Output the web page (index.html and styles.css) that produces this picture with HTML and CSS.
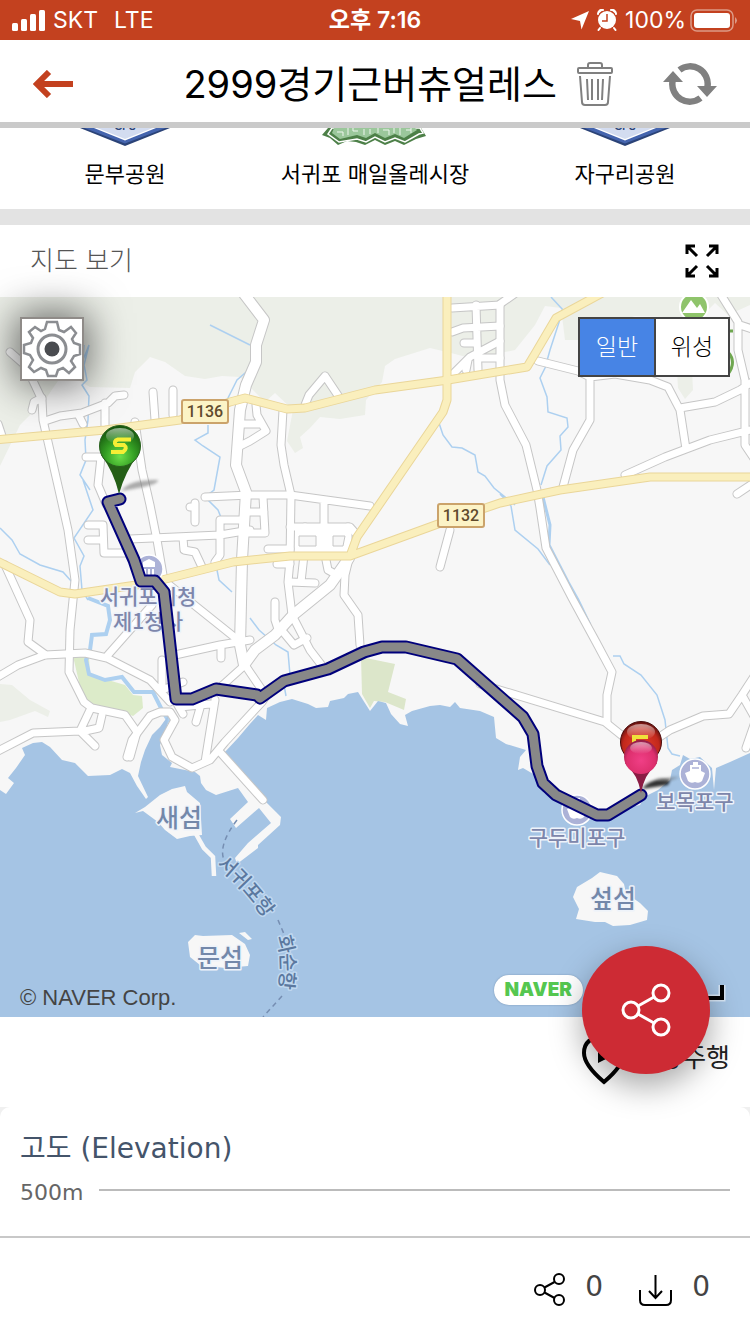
FILE: index.html
```html
<!DOCTYPE html>
<html lang="ko">
<head>
<meta charset="utf-8">
<meta name="viewport" content="width=device-width">
<title>2999경기근버츄얼레스</title>
<link rel="stylesheet" href="styles.css">
</head>
<body>
<div class="status">
  <div class="status-left">
    <svg width="33" height="21" viewBox="0 0 33 21" fill="#fff"><rect y="13" width="6" height="8" rx="1.5"/><rect x="9" y="9" width="6" height="12" rx="1.5"/><rect x="18" y="4" width="6" height="17" rx="1.5"/><rect x="27" width="6" height="21" rx="1.5"/></svg>
    <span>SKT</span><span class="net">LTE</span>
  </div>
  <div class="clock">오후 7:16</div>
  <div class="status-right">
    <svg width="18" height="19" viewBox="0 0 18 19"><path d="M18 0 10.500 18.500 9 10 0 8Z" fill="#fff"/></svg>
    <svg width="20" height="22" viewBox="0 0 20 22"><g fill="#fff"><circle cx="10" cy="11" r="9"/><path d="M1 5a4 4 0 0 1 5-4M19 5a4 4 0 0 0-5-4M3 19l-1.500 2M17 19l1.500 2" stroke="#fff" stroke-width="2" stroke-linecap="round"/></g><path d="M10 5v7H5" fill="none" stroke="#c3411f" stroke-width="1.500"/></svg>
    <span>100%</span>
    <svg width="48" height="23" viewBox="0 0 48 23"><rect x="1" y="1" width="42" height="21" rx="6" fill="none" stroke="#dd9a86" stroke-width="1.500"/><rect x="4" y="4" width="36" height="15" rx="3" fill="#fff"/><path d="M45 8q4 3.500 0 7z" fill="#dd9a86"/></svg>
  </div>
</div>
<header class="titlebar">
  <button class="icon-btn" aria-label="뒤로"><svg width="41" height="28" viewBox="0 0 41 28"><path d="M41 14H6M17 2 5 14l12 12" fill="none" stroke="#c3411f" stroke-width="6"/></svg></button>
  <h1>2999경기근버츄얼레스</h1>
  <button class="icon-btn trash" aria-label="삭제"><svg width="36" height="44" viewBox="0 0 36 44" fill="none" stroke="#808080" stroke-width="2"><path d="M11 5V3q0-2 2-2h10q2 0 2 2v2" /><rect x="1" y="6" width="34" height="5" rx="1"/><path d="M3 14l2 26q0 3 3 3h20q3 0 3-3l2-26M10 17l1 21M15 17v21M21 17v21M26 17l-1 21"/></svg></button>
  <button class="icon-btn" aria-label="새로고침"><svg width="54" height="42" viewBox="0 0 54 42"><path d="M16.500 7a17.500 17.500 0 0 1 28 16.500M37.500 35a17.500 17.500 0 0 1-28-16.500" fill="none" stroke="#808080" stroke-width="6.500"/><path d="M34 23h20L44 34zM0 19h20L10 8z" fill="#808080"/></svg></button>
</header>

<ul class="courses">
  <li>
    <svg width="100" height="18" viewBox="0 0 100 18"><path d="M0-2 50 18 100-2z" fill="#2b4377"/><path d="M4-2 50 15.500 96-2z" fill="#4464ae"/><path d="M14-2 50 12.500 86-2z" fill="#fff"/><path d="M17-2 50 11 83-2z" fill="#d3dcf0"/><text x="50" y="2" class="gps">GPS</text></svg>
    <span>문부공원</span>
  </li>
  <li>
    <svg width="106" height="18" viewBox="0 0 106 18"><path d="M6 0 0 7l8 3 8 7 9-4 9 1 9 3 10-5 10 5 10-4 9 4 12-6 10-3-5-8z" fill="#4d8048"/><path d="M10 0 6 6l11 8 18-3 9 3 9-5 10 5 10-4 10 4 14-8 4-1-3-5z" fill="none" stroke="#fff" stroke-width="1.500"/><path d="M12 0 10 5l8 6 17-4 9 3 9-5 10 5 10-4 9 4 13-8-2-2z" fill="#9bc79b"/><path d="M15 4h6v4M26 0v7M31 0v3h5M42 1v6M48 1v5M56 0v5M61 2h6v5M72 0v5M78 0v7M84 2h5M89 0v5" fill="none" stroke="#eef6ee" stroke-width="1"/></svg>
    <span>서귀포 매일올레시장</span>
  </li>
  <li>
    <svg width="100" height="18" viewBox="0 0 100 18"><path d="M0-2 50 18 100-2z" fill="#2b4377"/><path d="M4-2 50 15.500 96-2z" fill="#4464ae"/><path d="M14-2 50 12.500 86-2z" fill="#fff"/><path d="M17-2 50 11 83-2z" fill="#d3dcf0"/><text x="50" y="2" class="gps">GPS</text></svg>
    <span>자구리공원</span>
  </li>
</ul>

<section class="map-section">
  <div class="section-head">
    <h2>지도 보기</h2>
    <button class="icon-btn" aria-label="전체 화면"><svg width="34" height="34" viewBox="0 0 34 34" fill="none" stroke="#000" stroke-width="3"><path d="M2 10V2h8M2 2l10 10M24 2h8v8M32 2 22 12M2 24v8h8M2 32l10-10M24 32h8v-8M32 32 22 22"/></svg></button>
  </div>
  <div class="map">
    <svg class="map-canvas" viewBox="0 297 750 720" role="img" aria-label="지도">
      <defs>
        <radialGradient id="green" cx=".5" cy=".75" r=".7"><stop offset="0" stop-color="#6de04a"/><stop offset=".5" stop-color="#35a024"/><stop offset="1" stop-color="#17590f"/></radialGradient>
        <radialGradient id="red" cx=".5" cy=".6" r=".62"><stop offset="0" stop-color="#e8402c"/><stop offset=".7" stop-color="#c2281c"/><stop offset="1" stop-color="#4c0b0b"/></radialGradient>
        <radialGradient id="pink" cx=".5" cy=".6" r=".6"><stop offset="0" stop-color="#f03f86"/><stop offset=".7" stop-color="#dd2f6d"/><stop offset="1" stop-color="#8b1c44"/></radialGradient>
        <linearGradient id="gloss" x2="0" y2="1"><stop offset="0" stop-color="#fff" stop-opacity=".55"/><stop offset="1" stop-color="#fff" stop-opacity="0"/></linearGradient>
        <filter id="soft" x="-50%" y="-100%" width="200%" height="300%"><feGaussianBlur stdDeviation="1.800"/></filter>
        <path id="ferry-a" d="M222 859 Q250 881 281 926"/>
        <path id="ferry-b" d="M285 935 Q294 962 286 998"/>
        <g id="roads">
          <path d="M10 352 26 366 34 383 42 400 43 420 59 490 68 530 75 580 70 630 69 672 84 702 92 708 125 715 137 732 130 757"/>
          <path d="M45 421 60 416 82 413 108 403 115 396 124 395M32 410 34 402 42 398M78 414 83 424M105 403V430M86 457H101L98 485 106 504"/>
          <path d="M135 422 142 470 150 505 157 540 163 575M153 392 155 420M173 390V415M-2 424 2 436"/>
          <path d="M256 405 257 415 266 431 250 441 240 446M240 424H262M283 410 281 445 284 465 291 495 290 560 288 582 292 615 310 650 323 667"/>
          <path d="M305 405 309 395 325 376 339 397M452 308 500 305M476 305 478 370M452 332 463 328 500 326M464 343H476M452 375 470 357 500 341M466 370 468 360M478 358H500"/>
          <path d="M520 290 500 304V380L505 405 526 445 537 490 540 508 546 548 572 598 596 642 612 672 607 695V722"/>
          <path d="M538 361 578 371 590 377 615 374 650 380 668 387 680 410 686 449M590 377V420L573 450 563 487M680 408 715 402 740 390 755 380M625 475 665 457 710 440 755 429M718 290 738 322V350L745 380V445L755 460M740 325 755 330M737 494 755 482"/>
          <path d="M480 684 605 722 640 750 670 730 703 716 729 714 742 695 755 675M742 695 755 718M746 748 755 722"/>
          <path d="M205 497 250 495H290L370 506M324 500V555M290 527H350L357 535M268 549H290M277 564H290M304 555 301 582M290 582 315 583M263 497 265 533H246M246 512H264M350 555 345 575 344 595 358 615 360 645"/>
          <path d="M325 555 328 570 337 575M275 602V620L279 632M284 633 294 645 307 638M440 567 450 530M305 527V555M348 527V555"/>
          <path d="M130 539 220 535 250 530M88 525H103L104 553H128M88 540H103M195 503V522M190 507H195M240 520H220V555L215 562M183 538 184 550 195 552 202 567"/>
          <path d="M5 565 30 620 28 642 46 655M-4 678 18 665 45 655 85 653 107 658 150 680 170 702M107 656 152 605M168 584 238 640M175 655 220 645 250 640M221 645V658M162 660V690L183 682"/>
          <path d="M-4 752 33 733 80 731 90 710M80 731 95 746M102 715 99 728 85 731M127 757 132 740 150 716 160 712H170L175 720 164 740 172 757 192 768 210 760 225 742 262 702 270 690M205 762 215 700M219 751 263 800M180 707 210 704M200 708 196 722M175 700 183 714M215 692 245 665 262 690"/>
        </g>
        <g id="wide-roads">
          <path d="M238 286 264 320 256 345V362L246 385 240 410 236 465 246 492 242 560 240 645 244 665"/>
          <path d="M349 558 330 585 293 615 275 635 255 650 244 665"/>
        </g>
        <g id="highways">
          <path d="M-5 440 105 430 180 420 230 402 245 398 287 409 305 408 375 390 448 380 527 367 536 352 556 318 606 291"/>
          <path d="M447 290V400L443 412 357 537 350 556M-5 560 60 592 75 594 150 583 233 562 290 556H350L438 524 500 503 560 490 650 477H755"/>
        </g>
      </defs>
      <path d="M0 297H750V1017H0z" fill="#f7f7f7"/>
      <path d="M0 297H500V356L470 358 455 354 430 348 395 359 385 366 382 382 366 400 365 415 340 419 320 417 310 428 300 437 303 448 295 453 287 441 293 410 275 393 265 402 240 377 222 376 205 379 185 376 165 362 150 357 135 372 130 388 90 387 64 372 45 400 20 425 0 466Z" fill="#ecefe8"/>
      <path d="M500 297H750V305L728 315 715 303 700 318 635 316 605 325 600 340 565 340 561 308 545 306 535 325 515 350 500 353ZM677 370 692 370 693 390 685 399 678 388ZM0 684 12 685 30 700 50 711 48 717 35 711 10 720 0 722Z" fill="#ecefe8"/>
      <path d="M73 656 89 657 90 676 108 680 125 685 133 695 142 696 143 708 133 716 119 711 91 708 83 700Z" fill="#dcebc9"/>
      <path d="M361 657 395 664 388 692 406 699 404 710 385 702 374 701 370 708 362 694Z" fill="#dce6ca"/>
      <g class="water">
        <path d="M210 325 250 345M252 367 237 380 227 400M208 425 208 433 195 440 203 446 220 457 214 490 205 497 218 510 224 525M217 570 219 580 232 592M0 528 12 540 20 554 40 565 63 572 72 582M83 480 93 510 74 538 84 556 80 566 82 590 88 600M84 345 83 360 89 345 84 365 87 380 82 385 89 396 88 420 85 440 86 460 80 475 90 490M439 423 443 435 452 447 462 448 475 455 478 472 485 476 494 488 515 505M551 297 563 310 550 350 545 368 540 378 547 397 548 412 567 418 568 427 560 436 561 450 547 466 541 485M500 494 511 506 515 530 538 549 550 565M613 656H620L624 664 641 675 657 695 665 720 668 748 672 754 680 756M250 618 259 630 276 645 288 652 290 675 284 685 286 696"/>
        <path d="M543 497 550 525 549 545 568 582 578 600 590 625" stroke-width="3"/>
        <path d="M88 598 108 606 110 620 106 634 92 635 90 650 86 660 89 674 105 680 122 677 134 692 153 692 162 710 168 720 158 735" stroke-width="4"/>
      </g>
      <path d="M0 790 6 794 14 783 8 778 16 768 25 755 22 748 33 743 42 742 50 747 62 760 75 763 88 776 110 775 122 769 130 773 137 786 146 799 148 797 138 776 141 762 145 750 152 735 160 727 168 716 167 728 160 745 162 755 172 763 170 767 195 772 200 776 201 783 206 790 216 795 238 788 248 802 230 819 236 828 259 808 271 823 248 843 235 858 237 864 258 848 258 845 280 825 281 817 266 802 224 753 238 738 249 725 258 715 266 720 267 708 280 702 292 699 308 704 316 708 328 707 330 701 344 698 348 694 358 692 363 700 370 711 378 701 386 703 391 714 400 724 408 726 405 715 412 711 430 706 440 705 450 707 455 702 460 708 480 711 494 717 496 738 506 744 526 750 520 757 518 770 523 768 535 775 544 793 560 803 600 820 625 808 640 805 644 797 658 790 670 780 672 770 680 765 683 755 690 759 700 757 712 768 714 790 716 768 730 762 750 753V1017H0Z" fill="#a5c4e4"/>
      <g fill="#f7f7f7">
        <path d="M135 813 145 807 160 795 172 789 185 786 187 792 200 803 202 835 190 836 177 839 165 830 158 822 143 811ZM188 942 195 935 203 936 232 935 245 944 250 955 248 966 225 968 200 965 190 957ZM239 933 245 932 252 939 248 940ZM573 897 577 887 592 878 600 872 617 876 624 884 626 893 640 903 648 911 647 920 630 925 613 926 605 922 595 922 576 919 579 909Z"/>
        <path d="M196 834 204 848 213 857 214 876" fill="none" stroke="#f7f7f7" stroke-width="4.500"/>
      </g>
      <use href="#roads" class="road-edge"/><use href="#wide-roads" class="road-edge wide"/>
      <use href="#roads" class="road"/><use href="#wide-roads" class="road wide"/>
      <path d="M295 530H350L345 556H295z" fill="#fff"/>
      <path d="M299 536H316V546H299zM333 536H345L343 546H333z" fill="#f7f7f7" stroke="#c6c6c6"/>
      <use href="#highways" class="highway-edge"/><use href="#highways" class="highway"/>

      <g class="shield"><rect x="182" y="400" width="46" height="23" rx="2"/><text x="205" y="417">1136</text><rect x="438" y="504" width="46" height="23" rx="2"/><text x="461" y="521">1132</text></g>

      <g><circle cx="694" cy="307" r="14" fill="#8fc46b" stroke="#fff" stroke-width="2"/><path d="M682 313 691 300 697 308 700 304 705 313z" fill="#fff"/><path d="M728 331H733M728 352Q737 362 728 374" fill="none" stroke="#6fa750" stroke-width="3"/></g>

      <g fill="#acb2d7" stroke="#fff" stroke-width="1.500"><circle cx="149" cy="569" r="14"/><circle cx="577" cy="810" r="15"/><circle cx="695" cy="774" r="15"/></g>
      <path d="M143 567V562L149 559 155 562V567zM144 569H146V578H144zM148 569H150V578H148zM152 569H154V578H152z" fill="#fff"/>
      <g id="ship"><path d="M693 765V762H698V765H701V771L705 773 702 781Q699 784 695 782 691 784 688 781L685 773 690 771V765z" fill="#fff"/><path d="M692 768H699" stroke="#acb2d7" stroke-width="1.500"/></g>
      <use href="#ship" x="-118" y="36"/>

      <path d="M237 820Q218 845 224 860M278 920 284 934M282 996 263 1017" fill="none" stroke="#768eb2" stroke-width="1.500" stroke-dasharray="5 4"/>
      <g class="place">
        <text x="148" y="604">서귀포시청</text><text x="148" y="629">제1청사</text>
        <text x="577" y="845">구두미포구</text><text x="695" y="809">보목포구</text>
      </g>
      <g class="island"><text x="179" y="827">새섬</text><text x="220" y="967">문섬</text><text x="613" y="908">섶섬</text></g>
      <g class="ferry"><text><textPath href="#ferry-a">서귀포항</textPath></text><text><textPath href="#ferry-b">화순항</textPath></text></g>

      <g stroke-linecap="round" stroke-linejoin="round" fill="none">
        <path d="M120 499 108 502 134 560 141 581H155L164 592 176 699H192L216 689 257 695 260 698 284 681 328 669 364 652 382 647H406L457 659 523 717 533 734 537 766 543 783 556 795 597 815H608L641 795" stroke="#00007b" stroke-width="13"/>
        <path d="M120 499 108 502 134 560 141 581H155L164 592 176 699H192L216 689 257 695 260 698 284 681 328 669 364 652 382 647H406L457 659 523 717 533 734 537 766 543 783 556 795 597 815H608L641 795" stroke="#888" stroke-width="9"/>
      </g>

      <path d="M121 491Q130 479 158 480 160 485 121 491z" fill="#777" opacity=".6" filter="url(#soft)"/>
      <path d="M101 455Q114 472 119 494 125 472 138 455z" fill="#255f17"/><circle cx="120" cy="446" r="20.500" fill="url(#green)" stroke="#28601d"/><ellipse cx="120" cy="436" rx="14" ry="8" fill="url(#gloss)"/>
      <path d="M131 439.500H118Q113 441 116 445H124Q128 448 123 452H111" fill="none" stroke="#f5ee35" stroke-width="4"/>
      <path d="M642 789Q650 777 670 780L668 785z" fill="#000" opacity=".8" filter="url(#soft)"/><path d="M655 779 680 777 665 782z" fill="#555" opacity=".6" filter="url(#soft)"/>
      <circle cx="641" cy="742" r="20.500" fill="url(#red)" stroke="#4c0b0b"/><ellipse cx="641" cy="732" rx="14" ry="8" fill="url(#gloss)"/><path d="M634 744V737H648" fill="none" stroke="#f0e13a" stroke-width="4"/>
      <path d="M625 763Q638 775 641 793 644 775 657 763z" fill="#8b1c44"/><circle cx="641" cy="757" r="17" fill="url(#pink)"/><ellipse cx="641" cy="748" rx="11" ry="6" fill="url(#gloss)"/>
      <path d="M690 998H722V985" fill="none" stroke="#d8e6f5" stroke-width="7"/><path d="M690 998H722V985" fill="none" stroke="#000" stroke-width="4"/>
    </svg>
    <button class="gear" aria-label="설정"><svg viewBox="0 0 60 60" fill="none" stroke="#8b8d91" stroke-width="2.500"><path d="M25 3H35L37 11 42 13 49 8 54 14 50 20 52 24 58 26V35L52 37 49 42 53 48 47 54 41 49 36 51 34 57H26L24 51 19 49 12 53 7 48 11 41 8 36 2 34V26L9 24 11 19 7 13 13 8 19 12 23 10Z"/><circle cx="30" cy="30" r="14" stroke-width="3"/><circle cx="30" cy="30" r="7.500" fill="#4a4c50" stroke="none"/></svg></button>
    <div class="map-type"><button class="on">일반</button><button>위성</button></div>
    <span class="copyright">© NAVER Corp.</span>
    <span class="naver">NAVER</span>
    <button class="fab" aria-label="공유"><svg width="50" height="54" viewBox="0 0 50 54" fill="none" stroke="#fff" stroke-width="3"><circle cx="10" cy="27" r="8"/><circle cx="40" cy="10" r="8"/><circle cx="40" cy="44" r="8"/><path d="M17 23 33 14M17 31 33 40"/></svg></button>
  </div>
</section>

<div class="virtual"><button class="virtual-btn"><svg width="44" height="50" viewBox="0 0 44 50"><path d="M22 47Q2 30 2 18 2 2 22 2T42 18Q42 30 22 47z" fill="none" stroke="#000" stroke-width="4"/><path d="M16 14 30 21 16 28z"/></svg><span>가상주행</span></button></div>

<section class="elevation">
  <div class="card"><h2>고도 (Elevation)</h2><div class="axis"><span>500m</span><hr></div></div>
</section>
<footer class="bottom">
  <button class="count"><svg width="31" height="33" viewBox="0 0 31 33" fill="none" stroke="#000" stroke-width="2"><circle cx="6" cy="17" r="5"/><circle cx="25" cy="6" r="5"/><circle cx="25" cy="27" r="5"/><path d="M10.500 14.500 20.500 9M10.500 19.500 20.500 25"/></svg><span>0</span></button>
  <button class="count"><svg width="33" height="31" viewBox="0 0 33 31" fill="none" stroke="#000" stroke-width="2"><path d="M1 15V25Q1 30 6 30H27Q32 30 32 25V15M16.500 0V22M10 16 16.500 23 23 16"/></svg><span>0</span></button>
</footer>
</body>
</html>
```

FILE: styles.css
```css
* { box-sizing: border-box; }
body { margin: 0; background: #fff; color: #000; font-family: Inter, "Noto Sans CJK KR", sans-serif; }
button { border: 0; padding: 0; background: none; font: inherit; color: inherit; cursor: pointer; }
svg { display: block; flex: none; }
h1, h2 { margin: 0; font-weight: 400; }

.status { display: grid; grid-template-columns: 1fr auto 1fr; align-items: center; height: 40px; padding: 0 12px; background: #c3411f; color: #fff; font-size: 23px; line-height: 40px; white-space: nowrap; }
.status-left, .status-right { display: flex; align-items: center; gap: 8px; }
.status-left .net { margin-left: 8px; }
.status-right { justify-content: flex-end; }
.status-right span + svg { margin-left: -4px; }
.clock { font-weight: 600; }

.titlebar { display: flex; align-items: center; height: 88px; padding: 6px 33px 0 32px; border-bottom: 6px solid #cacaca; }
.titlebar h1 { flex: 1; text-align: right; font-size: 38px; line-height: 48px; white-space: nowrap; }
.trash { margin: 0 50px 0 20px; }

.courses { display: grid; grid-template-columns: repeat(3, 1fr); margin: 0; padding: 0; height: 81px; list-style: none; }
.courses li { display: flex; flex-direction: column; align-items: center; gap: 12px; font-size: 22px; line-height: 32px; white-space: nowrap; }
.gps { font: 700 10px "Liberation Sans", sans-serif; fill: #2b4377; text-anchor: middle; }

.map-section { border-top: 16px solid #e3e3e3; }
.section-head { display: flex; align-items: center; justify-content: space-between; height: 72px; padding: 0 31px 0 30px; }
.section-head h2 { color: #555; font-size: 26px; line-height: 40px; font-weight: 300; }
.map { position: relative; }
.map-canvas { width: 100%; height: auto; }
.water { fill: none; stroke: #add0f0; stroke-width: 1.5; }
.road-edge, .road, .highway-edge, .highway { fill: none; stroke-linecap: round; stroke-linejoin: round; }
.road-edge { stroke: #c6c6c6; stroke-width: 9; }
.road { stroke: #fff; stroke-width: 7; }
.road-edge.wide { stroke-width: 12; }
.road.wide { stroke-width: 10; }
.highway-edge { stroke: #ead699; stroke-width: 9; }
.highway { stroke: #faefbd; stroke-width: 7; }
.shield rect { fill: #fcf3c6; stroke: #cba36b; stroke-width: 2; }
.shield text { font: 500 16px Roboto, sans-serif; fill: #604a2c; text-anchor: middle; }
.place, .island, .ferry { font-family: "Noto Sans CJK KR", sans-serif; font-weight: 500; text-anchor: middle; paint-order: stroke; stroke: #eef3fa; stroke-width: 3; stroke-linejoin: round; }
.place { font-size: 21px; fill: #7d86ab; }
.island { font-size: 25px; fill: #7388aa; }
.ferry { font-size: 20px; fill: #5b789f; stroke: #c0d8f0; text-anchor: start; dominant-baseline: central; }

.gear { position: absolute; top: 20px; left: 20px; width: 64px; height: 64px; border: 2px solid #8f8b88; background: #fff; box-shadow: 0 0 40px 4px rgba(0, 0, 0, .6); }
.map-type { position: absolute; top: 20px; right: 20px; display: flex; border: 2px solid #444; background: #fff; font-size: 23px; font-weight: 300; }
.map-type button { width: 74px; height: 56px; line-height: 56px; }
.map-type .on { background: #4784e5; color: #fff; }
.map-type button + button { border-left: 2px solid #444; }
.copyright { position: absolute; left: 20px; bottom: 5px; color: #444; font: 22px/28px "Liberation Sans", sans-serif; }
.naver { position: absolute; right: 167px; bottom: 12px; padding: 0 11px; border-radius: 15px; background: #fff; box-shadow: 0 0 2px #7792b0; color: #55c750; font: 900 19px/30px Inter, sans-serif; }
.fab { position: absolute; right: 40px; bottom: -57px; display: grid; place-items: center; width: 128px; height: 128px; border-radius: 50%; background: #cd2b34; box-shadow: 0 12px 32px rgba(0, 0, 0, .35); }

.virtual { display: flex; justify-content: flex-end; height: 90px; padding: 18px 20px 0; }
.virtual-btn { display: flex; align-items: flex-start; gap: 8px; height: 50px; font-size: 26px; line-height: 46px; color: #222; }
.elevation { background: #f0f0f0; border-bottom: 2px solid #c8c8c8; }
.card { height: 129px; padding: 22px 20px; border-radius: 10px 10px 0 0; background: #fff; font-family: "DejaVu Sans", "Noto Sans CJK KR", sans-serif; }
.card h2 { color: #44546a; font-size: 28px; line-height: 40px; }
.axis { display: flex; align-items: center; gap: 16px; color: #666; font-size: 22px; line-height: 48px; }
.axis hr { flex: 1; margin: 0 0 6px; border: 0; border-top: 2px solid #bbb; }
.bottom { display: flex; justify-content: flex-end; gap: 36px; padding: 30px 40px; }
.count { display: flex; align-items: flex-end; gap: 20px; color: #444; font: 28px/38px "DejaVu Sans", sans-serif; }
```
